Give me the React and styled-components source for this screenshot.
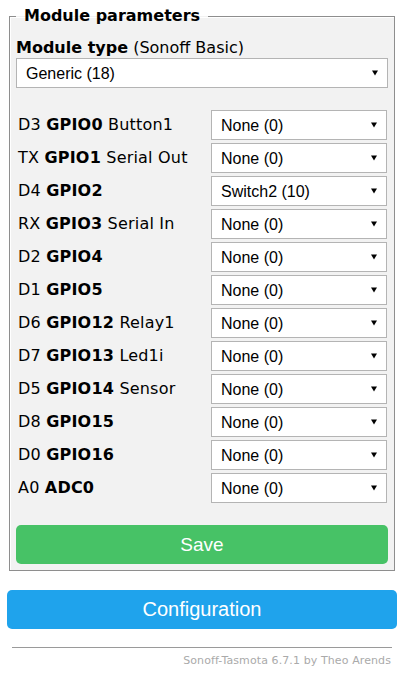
import React from "react";
import styled, { createGlobalStyle } from "styled-components";

const GlobalStyle = createGlobalStyle`
  html, body { margin: 0; padding: 0; background: #fff; }
  body { font-family: "DejaVu Sans", Verdana, sans-serif; color: #000; }
`;

const Page = styled.div`
  width: 390px;
  margin: 6px 0 0 7px;
  text-align: left;
`;

const Fieldset = styled.fieldset`
  margin: 0 2px;
  padding: 0 6px 6px 6px;
  border: 1px solid #8e8e8e;
  box-shadow: inset 1px 1px 0 #fff, 1px 1px 0 #fff;
  background: #f2f2f2;
  min-width: 0;
`;

const Legend = styled.legend`
  padding: 0 8px;
  font-size: 16px;
  font-weight: bold;
  line-height: 20px;
  background: linear-gradient(to bottom, #fff 50%, transparent 50%);
`;

const TypeLabel = styled.div`
  margin-top: 12px;
  font-size: 16px;
  line-height: 20px;
  b { font-weight: bold; }
`;

const SelectWrap = styled.div`
  position: relative;
  width: ${(p) => p.$width || "100%"};
  height: 30px;
`;

const Select = styled.select`
  appearance: none;
  -webkit-appearance: none;
  width: 100%;
  height: 100%;
  box-sizing: border-box;
  border: 1px solid #b4b4b4;
  border-radius: 0;
  background: #fff;
  padding: 0 0 0 9px;
  font-family: "Liberation Sans", Arial, sans-serif;
  font-size: 16px;
  color: #000;
  outline: none;
`;

const Arrow = styled.svg`
  position: absolute;
  right: 10px;
  top: 12px;
  width: 6px;
  height: 6px;
  pointer-events: none;
`;

const Spacer = styled.div`
  height: 22px;
`;

const Grid = styled.div`
  display: grid;
  grid-template-columns: 1fr 176px;
  row-gap: 3px;
  align-items: center;
  padding-right: 1px;
`;

const Label = styled.div`
  padding-left: 2px;
  font-size: 16px;
  line-height: 20px;
  white-space: nowrap;
  letter-spacing: 0.2px;
  b { font-weight: bold; }
`;

const Button = styled.button`
  display: block;
  width: 100%;
  border: 0;
  border-radius: 5px;
  background: ${(p) => p.$bg};
  color: #fff;
  font-family: "Liberation Sans", Arial, sans-serif;
  font-size: ${(p) => p.$size || "19px"};
  line-height: 39px;
  height: 39px;
  padding: 0;
  cursor: pointer;
`;

const SaveButton = styled(Button)`
  margin-top: 22px;
`;

const ConfigButton = styled(Button)`
  margin-top: 19px;
`;

const Rule = styled.hr`
  margin: 18px 5px 0 5px;
  border: 0;
  border-top: 1px solid #9a9a9a;
  height: 0;
`;

const Footer = styled.div`
  text-align: right;
  margin: 6px 6px 0 0;
  font-size: 11px;
  line-height: 14px;
  letter-spacing: 0.1px;
  color: #aaa;
`;

function Dropdown({ value, width }) {
  return (
    <SelectWrap $width={width}>
      <Select defaultValue={value}>
        <option value={value}>{value}</option>
      </Select>
      <Arrow viewBox="0 0 6 6">
        <path d="M0 0.5H6L3 5.5Z" fill="#000" />
      </Arrow>
    </SelectWrap>
  );
}

const rows = [
  ["D3", "GPIO0", "Button1", "None (0)"],
  ["TX", "GPIO1", "Serial Out", "None (0)"],
  ["D4", "GPIO2", "", "Switch2 (10)"],
  ["RX", "GPIO3", "Serial In", "None (0)"],
  ["D2", "GPIO4", "", "None (0)"],
  ["D1", "GPIO5", "", "None (0)"],
  ["D6", "GPIO12", "Relay1", "None (0)"],
  ["D7", "GPIO13", "Led1i", "None (0)"],
  ["D5", "GPIO14", "Sensor", "None (0)"],
  ["D8", "GPIO15", "", "None (0)"],
  ["D0", "GPIO16", "", "None (0)"],
  ["A0", "ADC0", "", "None (0)"],
];

export default function App() {
  return (
    <>
      <GlobalStyle />
      <Page>
        <Fieldset>
          <Legend>Module parameters</Legend>
          <TypeLabel>
            <b>Module type</b> (Sonoff Basic)
          </TypeLabel>
          <Dropdown value="Generic (18)" />
          <Spacer />
          <Grid>
            {rows.map(([pin, gpio, fn, val]) => (
              <React.Fragment key={gpio}>
                <Label>
                  {pin} <b>{gpio}</b>
                  {fn ? ` ${fn}` : ""}
                </Label>
                <Dropdown value={val} />
              </React.Fragment>
            ))}
          </Grid>
          <SaveButton $bg="#47c266">Save</SaveButton>
        </Fieldset>
        <ConfigButton $bg="#1fa3ec" $size="20px">Configuration</ConfigButton>
        <Rule />
        <Footer>Sonoff-Tasmota 6.7.1 by Theo Arends</Footer>
      </Page>
    </>
  );
}
